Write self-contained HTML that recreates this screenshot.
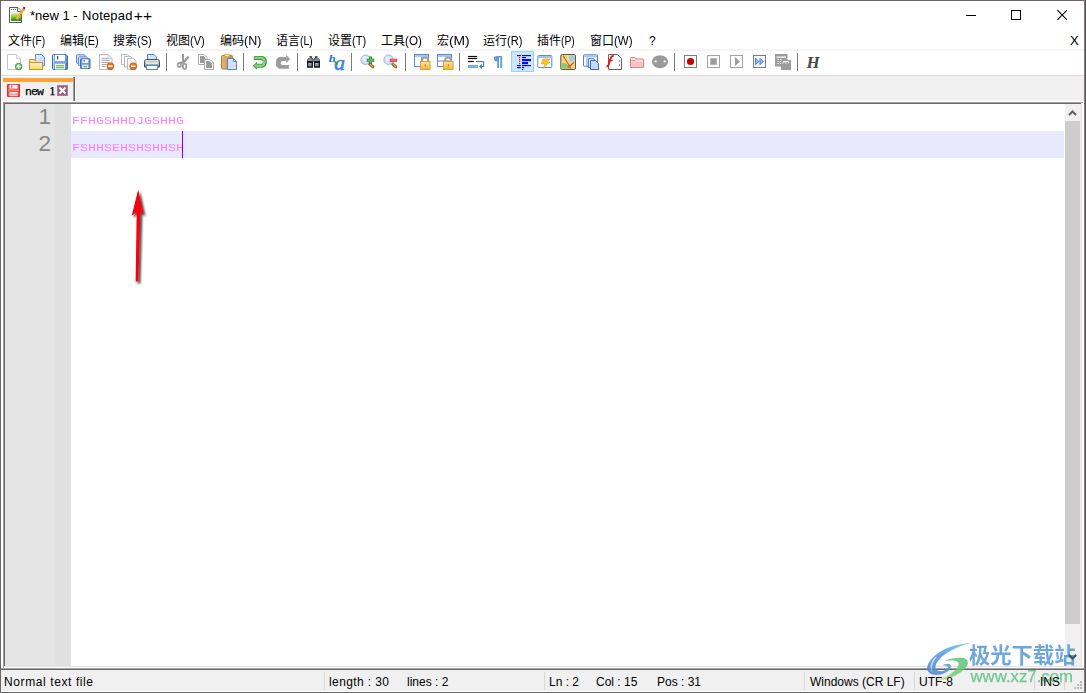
<!DOCTYPE html>
<html lang="zh-CN">
<head>
<meta charset="utf-8">
<title>*new 1 - Notepad++</title>
<style>
*{box-sizing:border-box;margin:0;padding:0}
html,body{width:1086px;height:693px;overflow:hidden;background:#fff}
body{position:relative;font-family:"Liberation Sans","Noto Sans CJK SC",sans-serif;font-size:12px;color:#000}
.abs{position:absolute}
#win{position:absolute;left:0;top:0;width:1086px;height:693px;background:#fff;overflow:hidden}
/* title */
#title{position:absolute;left:30px;top:8px;height:16px;line-height:16px;font-size:13px;white-space:nowrap;color:#000}
/* menu */
.mi{position:absolute;top:33px;height:17px;line-height:17px;font-size:12px;white-space:nowrap}
.l{display:inline-block;transform:scaleX(.86);transform-origin:0 50%}
/* toolbar */
.sep{position:absolute;top:53px;width:1px;height:18px;background:#808080}
.ic{position:absolute;top:54px;width:16px;height:16px;overflow:visible}
/* tab bar */
#tabbar{position:absolute;left:1px;top:76px;width:1083px;height:26px;background:#f0f0f0}
/* editor */
#ed{position:absolute;left:3px;top:102px;width:1080px;height:566px;background:#fff}
.ln{position:absolute;left:0;width:52px;text-align:right;font-size:22.5px;color:#868686;height:27px;line-height:27px;padding-right:4px;margin-top:-1.500px}
.code{position:absolute;left:72px;font-family:"Liberation Mono",monospace;font-size:11.600px;letter-spacing:0;color:#ff80ff;height:27px;line-height:27px;white-space:pre;margin-top:3px;transform:scaleX(1.1494);transform-origin:0 50%}
/* status */
#status{position:absolute;left:1px;top:668px;width:1083px;height:24px;background:#f0f0f0}
.st{position:absolute;top:674px;height:16px;line-height:16px;font-size:12px;white-space:nowrap}
.ssep{position:absolute;top:672px;width:1px;height:18px;background:#d7d7d7}
</style>
</head>
<body>
<div id="win">

<!-- title bar -->
<svg class="abs" style="left:6px;top:4px" width="22" height="22" viewBox="6 4 22 22">
  <defs><linearGradient id="gN" x1="0" y1="0" x2="0" y2="1"><stop offset="0" stop-color="#dce838"/><stop offset=".45" stop-color="#8cd030"/><stop offset=".85" stop-color="#2c9420"/><stop offset="1" stop-color="#0c5c10"/></linearGradient></defs>
  <path d="M9.500 7.500h8.500l3.500 3.500v11.500h-12z" fill="#fff" stroke="#585858"/>
  <path d="M17.500 7.500v4h4" fill="#fff" stroke="#585858"/>
  <path d="M11 9.500h1M13 9.500h1M15 9.500h1" stroke="#686868" stroke-width="1"/>
  <rect x="11" y="11.500" width="6.500" height="1" fill="#c8dcf0"/>
  <rect x="11" y="13.600" width="10" height="7.200" fill="url(#gN)"/>
  <rect x="11" y="13.200" width="10" height="1" fill="#d0e0f4"/>
  <path d="M23.300 9.300L17.600 18.300" stroke="#f0a010" stroke-width="2.600"/>
  <path d="M23 9L17.300 18" stroke="#f8c850" stroke-width=".8"/>
  <path d="M16.400 17.600l2.200 1.400l-2.300 1.300z" fill="#e8c89c"/>
  <path d="M16.500 19.300l.9 .5l-1.100 .7z" fill="#222"/>
  <path d="M22.700 10.200l1.300-2l1.300 .8l-1.300 2z" fill="#9cb4d4"/>
  <rect x="23" y="6.900" width="2.200" height="2.200" rx=".5" fill="#a80010" transform="rotate(32 24.100 8)"/>
</svg>
<div id="title">*new 1 - <span style="letter-spacing:.2px;margin-left:.8px">Notepad</span><span style="font-size:15.500px;line-height:10px;letter-spacing:.3px;margin-left:1px;position:relative;top:.6px">++</span></div>
<svg class="abs" style="left:960px;top:4px" width="120" height="24" viewBox="0 0 120 24">
  <path d="M6.200 11.500h9.800" stroke="#000" stroke-width="1"/>
  <rect x="51.5" y="6.500" width="9" height="9" fill="none" stroke="#000" stroke-width="1"/>
  <path d="M97.400 6.200l9.600 9.600M107 6.200l-9.600 9.600" stroke="#000" stroke-width="1.1"/>
</svg>

<!-- menu bar -->
<div class="mi" style="left:8px">文件<span class="l">(F)</span></div>
<div class="mi" style="left:60px">编辑<span class="l" style="transform:scaleX(0.92)">(E)</span></div>
<div class="mi" style="left:113px">搜索<span class="l" style="transform:scaleX(0.92)">(S)</span></div>
<div class="mi" style="left:166px">视图<span class="l" style="transform:scaleX(0.92)">(V)</span></div>
<div class="mi" style="left:220px">编码<span class="l" style="transform:scaleX(1.04)">(N)</span></div>
<div class="mi" style="left:276px">语言<span class="l">(L)</span></div>
<div class="mi" style="left:328px">设置<span class="l" style="transform:scaleX(0.93)">(T)</span></div>
<div class="mi" style="left:381px">工具<span class="l" style="transform:scaleX(0.97)">(O)</span></div>
<div class="mi" style="left:437px">宏<span class="l" style="transform:scaleX(1.15)">(M)</span></div>
<div class="mi" style="left:483px">运行<span class="l" style="transform:scaleX(0.92)">(R)</span></div>
<div class="mi" style="left:537px">插件<span class="l">(P)</span></div>
<div class="mi" style="left:590px">窗口<span class="l" style="transform:scaleX(0.96)">(W)</span></div>
<div class="mi" style="left:649px">?</div>
<div class="mi" style="left:1070px;top:32px;font-size:13px">X</div>
<div class="abs" style="left:1px;top:49px;width:1083px;height:1px;background:#f4f4f4"></div>
<div class="abs" style="left:1px;top:50px;width:1083px;height:1px;background:#f3f3f3"></div>

<!-- toolbar -->
<!--TB--><svg class="abs" style="left:0;top:51px" width="1086" height="25" viewBox="0 51 1086 25">
<defs>
  <linearGradient id="gFold" x1="0" y1="0" x2="0" y2="1"><stop offset="0" stop-color="#fdf4cc"/><stop offset="1" stop-color="#fad868"/></linearGradient>
  <linearGradient id="gDoc" x1="0" y1="0" x2="1" y2="1"><stop offset="0" stop-color="#e8f1fe"/><stop offset="1" stop-color="#b4d0f8"/></linearGradient>
  <linearGradient id="gFlop" x1="0" y1="0" x2="0" y2="1"><stop offset="0" stop-color="#7ca4e0"/><stop offset="1" stop-color="#5684d0"/></linearGradient>
  <linearGradient id="gPrn" x1="0" y1="0" x2="0" y2="1"><stop offset="0" stop-color="#e8e8e8"/><stop offset="1" stop-color="#8c8c8c"/></linearGradient>
  <linearGradient id="gClip" x1="0" y1="0" x2="1" y2="0"><stop offset="0" stop-color="#e8b878"/><stop offset="1" stop-color="#c88838"/></linearGradient>
  <linearGradient id="gLock" x1="0" y1="0" x2="0" y2="1"><stop offset="0" stop-color="#fce49c"/><stop offset="1" stop-color="#f0b83c"/></linearGradient>
  <linearGradient id="gGreen" x1="0" y1="0" x2="0" y2="1"><stop offset="0" stop-color="#7ccc6c"/><stop offset="1" stop-color="#3a9a32"/></linearGradient>
</defs>
<!-- separators -->
<g fill="#7a7a7a">
<rect x="166" y="53" width="1" height="18"/><rect x="243" y="53" width="1" height="18"/><rect x="297" y="53" width="1" height="18"/>
<rect x="351" y="53" width="1" height="18"/><rect x="405" y="53" width="1" height="18"/><rect x="459" y="53" width="1" height="18"/>
<rect x="674" y="53" width="1" height="18"/><rect x="797" y="53" width="1" height="18"/>
</g>
<!-- 1 new -->
<g transform="translate(6,54)">
  <path d="M1.500.5h9l4 4v11h-13z" fill="#fff" stroke="#c4c4c4"/>
  <path d="M10.500.5v4h4" fill="#f4f4f4" stroke="#d0d0d0"/>
  <circle cx="12.600" cy="12.600" r="3.600" fill="#3c9838"/>
  <circle cx="12.600" cy="12.600" r="3.100" fill="#58b850" />
  <path d="M12.600 10.300v4.600M10.300 12.600h4.600" stroke="#fff" stroke-width="1.500"/>
</g>
<!-- 2 open -->
<g transform="translate(29,54)">
  <path d="M6.500.5h6l3 3v8.300h-9z" fill="url(#gDoc)" stroke="#5a90dc"/>
  <path d="M.5 15.500v-10h5.200l1.300 2" fill="#fbe6a4" stroke="#e08c20"/>
  <rect x=".5" y="8.500" width="13" height="7" fill="url(#gFold)" stroke="#e08c20"/>
</g>
<!-- 3 save -->
<g transform="translate(52,54)">
  <path d="M.5 1.500q0-1 1-1h12.500l1.500 1.500v12.500q0 1-1 1h-13q-1 0-1-1z" fill="url(#gFlop)" stroke="#3868b8"/>
  <rect x="1.200" y="1" width=".9" height="14" fill="#e4eefc"/>
  <rect x="3" y=".8" width="10" height="6.200" fill="#fff"/>
  <rect x="5" y="2" width="1.200" height="3.500" fill="#2a4c90"/>
  <rect x="2.500" y="7" width="11.500" height="2.500" fill="#8cb0e8" opacity=".7"/>
  <rect x="3" y="9.700" width="10" height="5.800" fill="#fff"/>
  <rect x="4" y="11" width="8" height="1.300" fill="#6cc040"/>
  <rect x="4" y="13" width="8" height="1.300" fill="#6cc040"/>
</g>
<!-- 4 save all -->
<g transform="translate(75,54)">
  <rect x="1.500" y=".8" width="8.500" height="8.500" rx=".6" fill="#dce8fa" stroke="#5c88d0"/>
  <rect x="3.500" y="2.800" width="8.500" height="8.500" rx=".6" fill="#dce8fa" stroke="#5c88d0"/>
  <rect x="5.500" y="4.800" width="9.500" height="9.700" rx=".6" fill="#6c98dc" stroke="#3c6cbc"/>
  <rect x="7.300" y="5.300" width="6" height="3.700" fill="#fff"/>
  <rect x="8.600" y="6" width="1" height="2" fill="#2a4c90"/>
  <rect x="7.300" y="10.800" width="6" height="3.400" fill="#fff"/>
  <rect x="8.200" y="11.700" width="4.200" height="1.600" fill="#6cc040"/>
</g>
<!-- 5 close -->
<g transform="translate(98,54)">
  <path d="M1.500.5h8.500l4 4v11h-12.500z" fill="#fff" stroke="#b8b8b8"/>
  <path d="M10 .5v4h4" fill="none" stroke="#c8c8c8"/>
  <path d="M3.500 4.500h6M3.500 6.500h8M3.500 8.500h8M3.500 10.500h5M3.500 12.500h4" stroke="#a0a0a0" stroke-width=".9"/>
  <circle cx="12.400" cy="12.200" r="3.700" fill="#d04808"/>
  <circle cx="12.400" cy="12.200" r="3.100" fill="#f0701c"/>
  <rect x="10.200" y="11.400" width="4.400" height="1.600" fill="#fff"/>
</g>
<!-- 6 close all -->
<g transform="translate(121,54)">
  <path d="M.5.500h6l2.500 2.500v7.500h-8.500z" fill="#fff" stroke="#bcbcbc"/>
  <path d="M3.500 2.500h6l2.500 2.500v8h-8.500z" fill="#fff" stroke="#bcbcbc"/>
  <path d="M6.500 4.500h6l2.500 2.500v8.500h-8.500z" fill="#fff" stroke="#bcbcbc"/>
  <circle cx="12.200" cy="12.200" r="3.700" fill="#d04808"/>
  <circle cx="12.200" cy="12.200" r="3.100" fill="#f0701c"/>
  <rect x="10" y="11.400" width="4.400" height="1.600" fill="#fff"/>
</g>
<!-- 7 print -->
<g transform="translate(144,54)">
  <path d="M3.500 6v-5.500h6.500l2.500 2.500v3z" fill="#cfe4fc" stroke="#4888d8"/>
  <path d="M.5 7.500q0-2 2-2h11q2 0 2 2v5.500h-15z" fill="url(#gPrn)" stroke="#505050"/>
  <rect x="2" y="8.500" width="12" height="1.500" fill="#f4f4f4" opacity=".8"/>
  <rect x="2.500" y="11.500" width="11" height="4" fill="#fff" stroke="#4888d8"/>
</g>
<!-- 8 cut -->
<g transform="translate(175,54)" fill="none" stroke="#9a9a9a">
  <path d="M8 0v9.500" stroke-width="2"/>
  <path d="M13.600 2.500l-5.200 6" stroke-width="2.200"/>
  <path d="M8 8.500l-4.500 .5" stroke-width="2.200"/>
  <rect x="2.800" y="9.200" width="3.200" height="3.600" rx="1" stroke-width="1.700"/>
  <rect x="8" y="9.800" width="3.200" height="5" rx="1.400" stroke-width="1.800"/>
</g>
<!-- 9 copy -->
<g transform="translate(198,54)">
  <path d="M.5.500h5.500l3 3v7h-8.500z" fill="#fff" stroke="#a8a8a8"/>
  <path d="M2 2h3.500l2 2v5h-5.500z" fill="#9a9a9a"/>
  <path d="M6.500 5.500h5.500l3.500 3.500v6.500h-9z" fill="#fff" stroke="#a8a8a8"/>
  <path d="M8 7h3.500l2.500 2.500v4.500h-6z" fill="#9a9a9a"/>
</g>
<!-- 10 paste -->
<g transform="translate(221,54)">
  <rect x=".5" y="1.500" width="11" height="13.500" rx="1" fill="url(#gClip)" stroke="#b87830"/>
  <rect x="3.500" y=".3" width="5" height="2.500" rx=".6" fill="#fbe49a" stroke="#c89030" stroke-width=".7"/>
  <path d="M6.500 4.500h6l3 3v8h-9z" fill="#d4e3fb" stroke="#4c84dc"/>
  <path d="M12.500 4.500v3h3" fill="none" stroke="#3c78d8" stroke-width=".8"/>
</g>
<!-- 11 undo -->
<g transform="translate(252,54)">
  <path d="M1.800 3.900h7.200q3.900 0 3.900 3.950t-3.900 3.950h-4.500" fill="none" stroke="#3a983a" stroke-width="4"/>
  <path d="M.8 11.800l4.200-4v8z" fill="#3a983a"/>
  <path d="M2.300 3.900h6.700q3.400 0 3.400 3.950t-3.400 3.950h-4.800" fill="none" stroke="#84d07c" stroke-width="2.400"/>
  <path d="M2 11.800l2.600-2.400v4.800z" fill="#84d07c"/>
</g>
<!-- 12 redo -->
<g transform="translate(275,54)">
  <path d="M11.300 2.900H4L1.100 5.500V12L4 14.800H13.900V11H7L5.800 9.800V8L7 6.900H11.300z" fill="#9c9c9c"/>
  <path d="M11.200 .8l3.900 4.100l-3.900 4.100z" fill="#9c9c9c"/>
</g>
<!-- 13 find -->
<g transform="translate(306,54)">
  <path d="M3.500 2h2.500v3h-2.500zM9 2h2.500v3h-2.500z" fill="#4c5660"/>
  <path d="M1 8q0-3.500 2-4h3.500l.5 1v8.700h-6zM8 5l.5-1h3.500q2 .5 2 4v5.700h-6z" fill="#15181c"/>
  <path d="M2.300 4.300h4l.4 2.700h-5.200zM8.700 4.300h4l.9 2.700h-5.300z" fill="#8494a4"/>
  <rect x="6.500" y="5" width="2" height="3" fill="#6c7884"/>
  <rect x="2.300" y="9" width="3.200" height="3.200" fill="#b4bcc8"/>
  <rect x="9.300" y="9" width="3.200" height="3.200" fill="#b4bcc8"/>
  <rect x="3.500" y="9.800" width="1" height="2.400" fill="#586068"/>
  <rect x="10.500" y="9.800" width="1" height="2.400" fill="#586068"/>
</g>
<!-- 14 replace -->
<g transform="translate(329,54)">
  <text transform="translate(-.3,7.600) scale(1.300,1)" font-family="Liberation Serif,serif" font-weight="bold" font-style="italic" font-size="10.500" fill="#2c70e0">b</text>
  <text transform="translate(5.300,15.600) scale(1.080,1)" font-family="Liberation Serif,serif" font-style="italic" font-size="20" fill="#3c80e8" stroke="#3c80e8" stroke-width=".55">a</text>
  <path d="M4.500 6.200l3 3" fill="none" stroke="#38a048" stroke-width="1.600"/>
  <path d="M8.800 6.800v3.700h-3.700z" fill="#38a048"/>
</g>
<!-- 15 zoom in -->
<g transform="translate(360,54)">
  <path d="M9.300 9.600l3.600 3.300" stroke="#a87028" stroke-width="3" stroke-linecap="round"/>
  <path d="M10 10.200l2.800 2.600" stroke="#d8a868" stroke-width="1" stroke-linecap="round"/>
  <circle cx="5.600" cy="5.700" r="4.700" fill="#d4e3f8" stroke="#98b4dc"/>
  <circle cx="4.800" cy="4.800" r="2.400" fill="#e8f0fc"/>
  <path d="M10.500 2.500v7.500M6.800 6.300h7.400" stroke="#2c882c" stroke-width="3"/>
  <path d="M10.500 3.300v6M7.600 6.300h5.800" stroke="#68c060" stroke-width="1.400"/>
</g>
<!-- 16 zoom out -->
<g transform="translate(383,54)">
  <path d="M9.300 9.600l3.600 3.300" stroke="#a87028" stroke-width="3" stroke-linecap="round"/>
  <path d="M10 10.200l2.800 2.600" stroke="#d8a868" stroke-width="1" stroke-linecap="round"/>
  <circle cx="5.600" cy="5.700" r="4.700" fill="#d4e3f8" stroke="#98b4dc"/>
  <circle cx="4.800" cy="4.800" r="2.400" fill="#e8f0fc"/>
  <rect x="6.800" y="4.800" width="7.400" height="3" fill="#e02828"/>
  <rect x="7.500" y="5.500" width="6" height="1.200" fill="#f88"/>
</g>
</svg>
<svg class="abs" style="left:0;top:51px" width="1086" height="25" viewBox="0 51 1086 25">
<!-- highlighted button -->
<rect x="511.500" y="51.500" width="22" height="20" fill="#cce8ff" stroke="#99d1ff"/>
<!-- 17 sync V -->
<g transform="translate(414,54)">
  <rect x=".5" y=".5" width="14" height="12" fill="#fff" stroke="#5c8cd8"/>
  <rect x="1" y="1" width="13" height="2" fill="#a8c8f4"/>
  <path d="M7.500 3v9.500" stroke="#5c8cd8"/>
  <path d="M8 9v-2.500q0-3 3-3t3 3v2.500" fill="none" stroke="#a0a0a0" stroke-width="1.800"/>
  <rect x="6.500" y="7.500" width="9.500" height="8" fill="url(#gLock)" stroke="#dca030"/>
  <rect x="10.700" y="10.300" width="1.200" height="2.400" fill="#c88820"/>
</g>
<!-- 18 sync H -->
<g transform="translate(437,54)">
  <rect x=".5" y=".5" width="14" height="12" fill="#fff" stroke="#5c8cd8"/>
  <rect x="1" y="1" width="13" height="2" fill="#a8c8f4"/>
  <path d="M.5 7h14" stroke="#5c8cd8"/>
  <path d="M8 9v-2.500q0-3 3-3t3 3v2.500" fill="none" stroke="#a0a0a0" stroke-width="1.800"/>
  <rect x="6.500" y="7.500" width="9.500" height="8" fill="url(#gLock)" stroke="#dca030"/>
  <rect x="10.700" y="10.300" width="1.200" height="2.400" fill="#c88820"/>
</g>
<!-- 19 wrap -->
<g transform="translate(468,54)">
  <rect x="0" y="1.900" width="9.200" height="1.200" fill="#111"/>
  <rect x="0" y="3.900" width="9.200" height="1.200" fill="#111"/>
  <rect x="0" y="6.900" width="5.800" height="1.200" fill="#111"/>
  <path d="M8 7.500h7.500v5h-2" fill="none" stroke="#3c78d0" stroke-width="1"/>
  <path d="M11 12.500l3-2.600v5.200z" fill="#3c78d0"/>
  <rect x="0" y="11" width="10" height="3" fill="#6ca4ec"/>
  <rect x="0" y="12" width="10" height="1" fill="#8cbcf4"/>
</g>
<!-- 20 pilcrow -->
<g transform="translate(491,54)">
  <path d="M6.300 1.900h4.800v12.100h-1.800v-10.600h-1.300v10.600h-1.800v-6.600q-3.400 0-3.400-2.800t3.500-2.700z" fill="#5c9cec"/>
</g>
<!-- 21 indent guide -->
<g fill="#0808f0">
  <rect x="517" y="55" width="3.800" height="1.200"/><rect x="522" y="55" width="9" height="1.200"/>
  <rect x="522" y="57" width="4" height="1.200"/>
  <rect x="522" y="59" width="9" height="2.200"/>
  <rect x="522" y="62" width="6" height="2.200"/>
  <rect x="517" y="65" width="3.800" height="1.200"/><rect x="522" y="65" width="9" height="1.200"/>
  <rect x="517" y="67" width="3.800" height="1.200"/><rect x="522" y="67" width="2.200" height="1.200"/>
  <rect x="522" y="69" width="1.200" height="1.200"/>
</g>
<g fill="#e81010"><rect x="519" y="57" width="1.200" height="1.200"/><rect x="519" y="59" width="1.200" height="1.200"/><rect x="519" y="61" width="1.200" height="1.200"/><rect x="519" y="63" width="1.200" height="1.200"/></g>
<!-- 22 UDL -->
<g transform="translate(537,54)">
  <rect x=".8" y="1.500" width="14" height="12" rx=".8" fill="#fff" stroke="#5c8cd8"/>
  <rect x="1.300" y="2" width="13" height="2.200" fill="#a4c4f0"/>
  <path d="M6 5h7l-3 3h3l-7 6.500 2-4.500h-4z" fill="#f4c430" stroke="#e0a818" stroke-width=".6"/>
</g>
<!-- 23 doc map -->
<g transform="translate(560,54)">
  <rect x=".8" y=".5" width="14.700" height="15" rx="1.500" fill="#e8dc78" stroke="#5c5848"/>
  <path d="M9 1.500h5.500v6h-5.500z" fill="#a4c8f0"/>
  <path d="M1.500 10q3-2 5 0t4 1v3.500h-9z" fill="#8cc878"/>
  <path d="M3 1.500l8 13M14 8.500l-6 5" stroke="#e84828" stroke-width="1.100" fill="none"/>
  <path d="M6.500 1.500l4.500 8" stroke="#f0e8a0" stroke-width=".8" fill="none"/>
</g>
<!-- 24 doc list -->
<g transform="translate(583,54)">
  <rect x=".5" y=".8" width="14" height="11.500" rx=".8" fill="#fff" stroke="#4c84d8"/>
  <rect x="1" y="1.300" width="13" height="2" fill="#a4c4f0"/>
  <path d="M4 3.500v8.500" stroke="#6c9ce0"/>
  <path d="M5.500 4.500h5l2 2v7h-7z" fill="#e4eefc" stroke="#4c84d8"/>
  <path d="M7.500 6.500h5l3 3v6h-8z" fill="#c4dafa" stroke="#3468c8"/>
</g>
<!-- 25 function list -->
<g transform="translate(606,54)">
  <path d="M2.500.5h9l4 4v11h-13z" fill="#fff" stroke="#686868"/>
  <path d="M13.500 6.500v1.500M13.500 10v2" stroke="#888" stroke-width="1"/>
  <path d="M7.700 2.200q-2.200-.6-3 1.800l-2.200 7q-.6 1.600-2 1.200" fill="none" stroke="#e01818" stroke-width="2"/>
  <path d="M2.500 6.500h4" stroke="#e01818" stroke-width="1.400"/>
</g>
<!-- 26 folder as workspace -->
<g transform="translate(629,54)">
  <path d="M1.500 4.500q0-1 1-1h3.500l1 1.500h6.500q1 0 1 1v7.500h-13z" fill="#fbe0e0" stroke="#d87878"/>
  <rect x="2.300" y="7.500" width="11.400" height="5.700" fill="#f4bcbc" opacity=".8"/>
  <path d="M2.500 6.500h4" stroke="#e09090"/>
</g>
<!-- 27 monitoring -->
<g transform="translate(652,54)">
  <ellipse cx="8" cy="7.700" rx="8" ry="6.500" fill="#9a9a9a"/>
  <circle cx="3.600" cy="7.400" r="1.100" fill="#fff"/>
  <circle cx="12.600" cy="7.400" r="1.100" fill="#fff"/>
</g>
<!-- 28 record -->
<g transform="translate(683,54)">
  <rect x="1.500" y="1.500" width="12" height="12" fill="#fff" stroke="#7c7c7c"/>
  <circle cx="7.500" cy="7.500" r="3.600" fill="#c40000"/>
</g>
<!-- 29 stop -->
<g transform="translate(706,54)">
  <rect x="1.500" y="1.500" width="12" height="12" fill="#fff" stroke="#a4a4a4"/>
  <rect x="4.300" y="4.300" width="6.500" height="6.500" fill="#9c9c9c"/>
</g>
<!-- 30 play -->
<g transform="translate(729,54)">
  <rect x="1.500" y="1.500" width="12" height="12" fill="#fff" stroke="#a4a4a4"/>
  <path d="M6 3v9l5-4.500z" fill="#9c9c9c"/>
</g>
<!-- 31 play multi -->
<g transform="translate(752,54)">
  <rect x="1.500" y="1.500" width="12" height="12" fill="#fff" stroke="#7c7c7c"/>
  <path d="M3 3.500v8l4.500-4zM7.500 3.500v8l4.500-4z" fill="#3c7ce0"/>
  <path d="M3.800 5v5l2.800-2.500zM8.300 5v5l2.800-2.500z" fill="#8cb8f4"/>
</g>
<!-- 32 save macro -->
<g transform="translate(775,54)">
  <rect x="0" y="0" width="12.500" height="12.500" fill="#9c9c9c"/>
  <rect x="1.500" y="2.500" width="9.500" height="1.300" fill="#fff"/>
  <path d="M2.500 5.500h1.300M5 5.500h1.300M2.500 7.500h1.300M5 7.500h1.300M2.500 9.500h1.300M5 9.500h1.300" stroke="#fff" stroke-width="1.200"/>
  <rect x="6" y="6" width="10" height="10" fill="#9c9c9c"/>
  <path d="M8 9.500v-2h5.500v2M10.700 7.500v2" stroke="#fff" stroke-width="1" fill="none"/>
</g>
<!-- 33 H -->
<text x="806.500" y="68" font-family="Liberation Serif,serif" font-weight="bold" font-style="italic" font-size="17" fill="#484848">H</text>
</svg>
<!--/TB-->

<!-- tab bar -->
<div id="tabbar"></div>
<div class="abs" style="left:1px;top:75px;width:1083px;height:1px;background:#dcdcdc"></div>
<div class="abs" style="left:2px;top:100px;width:1081px;height:1px;background:#f7f7f7"></div>
<div class="abs" style="left:2px;top:101px;width:1081px;height:1px;background:#fff"></div>
<div class="abs" style="left:75px;top:78px;width:1px;height:23px;background:#fcfcfc"></div>
<div class="abs" style="left:1px;top:76px;width:1px;height:616px;background:#fff"></div>
<div class="abs" style="left:1px;top:76px;width:74px;height:1px;background:#fff"></div>
<div class="abs" style="left:2px;top:77px;width:72px;height:1px;background:#eef3fa"></div>
<div class="abs" style="left:3px;top:82px;width:70px;height:1px;background:#edf1f7"></div>
<div class="abs" style="left:3px;top:78px;width:71px;height:4px;background:#faa535"></div>
<div class="abs" style="left:73px;top:77px;width:1px;height:24px;background:#a0a0a0"></div>
<div class="abs" style="left:74px;top:77px;width:1px;height:24px;background:#646464"></div>
<svg class="abs" style="left:7px;top:84px" width="13" height="13" viewBox="0 0 13 13">
  <rect x="0" y="0" width="13" height="13" rx="1" fill="#e02c2c"/>
  <rect x="1" y="1" width="11" height="11" fill="#f25454"/>
  <rect x="2.500" y=".8" width="8" height="3.700" fill="#fff"/>
  <rect x="4.300" y="1.200" width="1.200" height="2.600" fill="#e85050"/>
  <rect x="1" y="5.300" width="11" height="1.700" fill="#f87878"/>
  <rect x="2.500" y="8" width="8" height="4.200" fill="#fde0e0"/>
  <rect x="3" y="9.500" width="7" height="1.800" fill="#f4a0a0"/>
</svg>
<div id="tabtxt" class="abs" style="left:25px;top:84.300px;height:14px;line-height:14px;font-family:'Liberation Mono',monospace;font-size:11.5px;letter-spacing:-.9px;white-space:pre;-webkit-text-stroke:.25px #000">new <span style="font-family:'Liberation Serif',serif;font-size:12.500px;letter-spacing:0;margin-left:.3px">1</span></div>
<svg class="abs" style="left:57px;top:85px" width="11" height="11" viewBox="0 0 11 11">
  <rect width="11" height="11" fill="#b088a0"/><rect x=".8" y=".8" width="9.400" height="9.400" fill="#9c5c7c"/>
  <path d="M2.500 2.500l6 6M8.500 2.500l-6 6" stroke="#fff" stroke-width="2"/>
</svg>

<!-- editor -->
<div id="ed">
  <div class="abs" style="left:0;top:0;width:1080px;height:1px;background:#a0a0a0"></div>
  <div class="abs" style="left:0;top:0;width:1px;height:566px;background:#a0a0a0"></div>
  <div class="abs" style="left:1px;top:1px;width:1078px;height:1px;background:#696969"></div>
  <div class="abs" style="left:1px;top:1px;width:1px;height:564px;background:#696969"></div>
  <div class="abs" style="left:1px;top:564px;width:1078px;height:1px;background:#e3e3e3"></div>
  <div class="abs" style="left:1078px;top:1px;width:1px;height:564px;background:#e3e3e3"></div>
  <div class="abs" style="left:2px;top:2px;width:50px;height:562px;background:#e4e4e4"></div>
  <div class="abs" style="left:52px;top:2px;width:16px;height:562px;background:#e0e0e0"></div>
  <div class="abs" style="left:68px;top:29px;width:993px;height:27px;background:#e8e8ff"></div>
  <div class="ln" style="top:2px">1</div>
  <div class="ln" style="top:29px">2</div>
  <div class="code" style="left:68.500px;top:2px">FFHGSHHDJGSHHG</div>
  <div class="code" style="left:68.500px;top:29px">FSHHSEHSHSHHSH</div>
  <div class="abs" style="left:179px;top:29px;width:1px;height:27px;background:#8000ff"></div>
  <!-- scrollbar -->
  <div class="abs" style="left:1062px;top:2px;width:16px;height:562px;background:#f0f0f0"></div>
  <div class="abs" style="left:1062px;top:19px;width:15px;height:503px;background:#cdcdcd"></div>
  <svg class="abs" style="left:1061px;top:2px" width="17" height="17" viewBox="0 0 17 17"><path d="M5 11l3.500-3.500l3.500 3.500" fill="none" stroke="#606060" stroke-width="2"/></svg>
  <svg class="abs" style="left:1061px;top:547px" width="17" height="17" viewBox="0 0 17 17"><path d="M5 6l3.500 3.500l3.500-3.500" fill="none" stroke="#606060" stroke-width="2"/></svg>
</div>

<!-- status bar -->
<div id="status"></div>
<div class="abs" style="left:1px;top:668px;width:1083px;height:1px;background:#a4a4a4"></div>
<div class="abs" style="left:1px;top:669px;width:1083px;height:1px;background:#686868"></div>
<div class="abs" style="left:1px;top:691px;width:1083px;height:1px;background:#fff"></div>
<div class="ssep" style="left:324px"></div><div class="ssep" style="left:544px"></div><div class="ssep" style="left:804px"></div>
<div class="ssep" style="left:914px"></div><div class="ssep" style="left:1034px"></div><div class="ssep" style="left:1064px"></div>
<!-- watermark -->
<svg class="abs" style="left:920px;top:636px;opacity:.88" width="166" height="57" viewBox="920 636 166 57">
  <defs>
    <linearGradient id="wb" x1="1" y1="0" x2="0" y2="1"><stop offset="0" stop-color="#6ccdf4"/><stop offset=".45" stop-color="#5c9fe0"/><stop offset="1" stop-color="#4f86cf"/></linearGradient>
    <linearGradient id="wg" x1="1" y1="0" x2="0" y2="1"><stop offset="0" stop-color="#5cc484"/><stop offset=".6" stop-color="#74cc78"/><stop offset="1" stop-color="#e8e468"/></linearGradient>
  </defs>
  <path d="M971 643.100C960 643.800 949 646.500 940.500 651.500C932 656.800 926.500 664 927.200 669C928 673.800 933 675.500 939 674.800C946.500 673.800 951.500 669.500 950.800 665.300C950 662.800 945 663.300 941.800 666C945.500 665 948.200 665.800 948 667.800C947.300 670.500 942 671.800 938.500 670.800C934.500 669.500 934.800 665.500 937.800 661.300C942.500 654.500 955 647 971 643.100Z" fill="url(#wb)"/>
  <path d="M935.500 657C930.800 661.500 929 667.500 932.300 672.300C931 667.500 932.300 662 936.800 657.200Z" fill="#fff" opacity=".7"/>
  <path d="M944.800 661.100C950 658.200 958 657.200 963.500 658.100C968.500 659.300 969.300 663.500 965.800 667.500C960.500 674 949 680 937.300 680.300C946 677.500 953.500 672.800 956.800 668.300C959.800 664.300 959 661.500 955 660.700C951.500 660.200 948 660.400 944.800 661.100Z" fill="url(#wg)"/>
  <text x="969" y="662.500" font-family="Noto Sans CJK SC,sans-serif" font-weight="bold" font-size="21.300" fill="#5b9bd8">极光下载站</text>
  <text x="970.500" y="681.600" font-family="Liberation Sans,sans-serif" font-size="16.800" fill="#5ec286" stroke="#5ec286" stroke-width=".25">www.xz7.com</text>
</svg>
<svg class="abs" style="left:1064px;top:649px" width="17" height="17" viewBox="0 0 17 17"><path d="M5 6l3.500 3.500l3.500-3.500" fill="none" stroke="#3c5474" stroke-width="2"/></svg>

<div class="st" id="s1" style="left:4px;letter-spacing:.6px">Normal text file</div>
<div class="st" id="s2" style="left:329px;letter-spacing:.4px">length : 30</div>
<div class="st" id="s3" style="left:407px">lines : 2</div>
<div class="st" id="s4" style="left:549px">Ln : 2</div>
<div class="st" id="s5" style="left:596px">Col : 15</div>
<div class="st" id="s6" style="left:657px">Pos : 31</div>
<div class="st" id="s7" style="left:810px">Windows (CR LF)</div>
<div class="st" id="s8" style="left:919px">UTF-8</div>
<div class="st" id="s9" style="left:1040px">INS</div>
<svg class="abs" style="left:1072px;top:680px" width="12" height="12" viewBox="0 0 12 12" fill="#b8b8b8">
  <rect x="8" y="1" width="2" height="2"/><rect x="5" y="4" width="2" height="2"/><rect x="8" y="4" width="2" height="2"/>
  <rect x="2" y="7" width="2" height="2"/><rect x="5" y="7" width="2" height="2"/><rect x="8" y="7" width="2" height="2"/>
</svg>

<!-- red arrow annotation -->
<svg class="abs" style="left:110px;top:170px" width="60" height="130" viewBox="110 170 60 130">
  <defs><filter id="sh" x="-50%" y="-10%" width="200%" height="120%"><feGaussianBlur in="SourceAlpha" stdDeviation="1.300"/><feOffset dx="1.800" dy="1.800"/><feComponentTransfer><feFuncA type="linear" slope=".75"/></feComponentTransfer><feMerge><feMergeNode/><feMergeNode in="SourceGraphic"/></feMerge></filter></defs>
  <path d="M138.200 189.500L143.600 214.700L140.300 211.800L138.400 281.500L135.600 281.500L136.700 212.200L131.700 215.700Z" fill="#f8000c" filter="url(#sh)"/>
</svg>

<!-- window border -->
<div class="abs" style="left:0;top:0;width:1086px;height:1px;background:#686868"></div>
<div class="abs" style="left:0;top:0;width:1px;height:693px;background:#686868"></div>
<div class="abs" style="left:1084px;top:0;width:1px;height:693px;background:#7c7c7c"></div>
<div class="abs" style="left:1085px;top:0;width:1px;height:693px;background:#5e5658"></div>
<div class="abs" style="left:0;top:692px;width:1086px;height:1px;background:#686868"></div>

</div>
</body>
</html>
